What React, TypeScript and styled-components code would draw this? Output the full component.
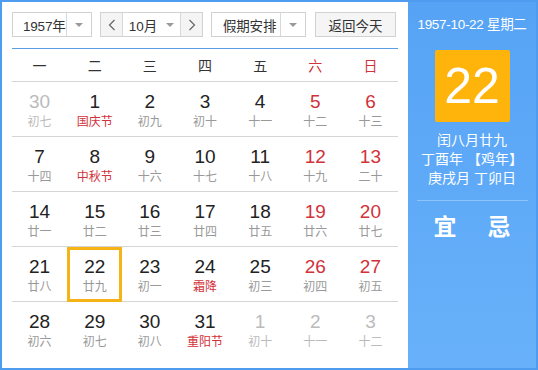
import styled, { createGlobalStyle } from "styled-components";

const GlobalStyle = createGlobalStyle`
  body {
    margin: 0;
    font-family: "Liberation Sans", "Noto Sans CJK SC", sans-serif;
  }
`;

type Day = {
  day: number;
  lunar: string;
  other?: boolean;
  festival?: boolean;
};

const weekNames = ["一", "二", "三", "四", "五", "六", "日"];

const days: Day[] = [
  { day: 30, lunar: "初七", other: true },
  { day: 1, lunar: "国庆节", festival: true },
  { day: 2, lunar: "初九" },
  { day: 3, lunar: "初十" },
  { day: 4, lunar: "十一" },
  { day: 5, lunar: "十二" },
  { day: 6, lunar: "十三" },
  { day: 7, lunar: "十四" },
  { day: 8, lunar: "中秋节", festival: true },
  { day: 9, lunar: "十六" },
  { day: 10, lunar: "十七" },
  { day: 11, lunar: "十八" },
  { day: 12, lunar: "十九" },
  { day: 13, lunar: "二十" },
  { day: 14, lunar: "廿一" },
  { day: 15, lunar: "廿二" },
  { day: 16, lunar: "廿三" },
  { day: 17, lunar: "廿四" },
  { day: 18, lunar: "廿五" },
  { day: 19, lunar: "廿六" },
  { day: 20, lunar: "廿七" },
  { day: 21, lunar: "廿八" },
  { day: 22, lunar: "廿九" },
  { day: 23, lunar: "初一" },
  { day: 24, lunar: "霜降", festival: true },
  { day: 25, lunar: "初三" },
  { day: 26, lunar: "初四" },
  { day: 27, lunar: "初五" },
  { day: 28, lunar: "初六" },
  { day: 29, lunar: "初七" },
  { day: 30, lunar: "初八" },
  { day: 31, lunar: "重阳节", festival: true },
  { day: 1, lunar: "初十", other: true },
  { day: 2, lunar: "十一", other: true },
  { day: 3, lunar: "十二", other: true },
];

const Frame = styled.div`
  width: 538px;
  height: 370px;
  box-sizing: border-box;
  border: 2px solid #4d9cef;
  display: flex;
`;

const Main = styled.div`
  width: 406px;
  box-sizing: border-box;
  padding: 10px 10px 0 10px;
  background: #fff;
`;

const Toolbar = styled.div`
  display: flex;
  height: 25px;
  gap: 8px;
  font-size: 13.5px;
  color: #333;
`;

const Select = styled.div<{ $w: number }>`
  width: ${(p) => p.$w}px;
  height: 25px;
  box-sizing: border-box;
  border: 1px solid #d2d2d2;
  display: flex;
  align-items: stretch;
  background: #fff;
  white-space: nowrap;
`;

const SelectText = styled.div<{ $pad: number }>`
  flex: 1;
  min-width: 0;
  display: flex;
  align-items: center;
  padding-left: ${(p) => p.$pad}px;
  letter-spacing: -0.2px;
`;

const ArrowBox = styled.div`
  flex-shrink: 0;
  width: 24px;
  border-left: 1px solid #d8d8d8;
  display: flex;
  align-items: center;
  justify-content: center;
  background: #fff;
`;

const Caret = styled.span`
  width: 0;
  height: 0;
  border-left: 4px solid transparent;
  border-right: 4px solid transparent;
  border-top: 4px solid #999;
`;

const NavBtn = styled.div<{ $side: "left" | "right" }>`
  flex-shrink: 0;
  width: 21px;
  display: flex;
  align-items: center;
  justify-content: center;
  background: #f4f4f4;
  ${(p) =>
    p.$side === "left"
      ? "border-right: 1px solid #d8d8d8;"
      : "border-left: 1px solid #d8d8d8;"}
`;

const MonthText = styled.div`
  flex: 1;
  display: flex;
  align-items: center;
  justify-content: center;
  gap: 9px;
`;

const TodayBtn = styled.div`
  margin-left: 1px;
  width: 81px;
  height: 25px;
  box-sizing: border-box;
  border: 1px solid #d2d2d2;
  background: #f5f5f5;
  display: flex;
  align-items: center;
  justify-content: center;
`;

const Grid = styled.div`
  margin-top: 11px;
  border-top: 1px solid #5a9fe6;
  display: grid;
  grid-template-columns: repeat(7, 1fr);
`;

const Week = styled.div<{ $red: boolean }>`
  height: 32px;
  border-bottom: 1px solid #d5d5d5;
  display: flex;
  align-items: center;
  justify-content: center;
  font-size: 14px;
  color: ${(p) => (p.$red ? "#d2323a" : "#333")};
`;

const Cell = styled.div<{ $last: boolean; $sel: boolean }>`
  height: 55px;
  box-sizing: border-box;
  border-bottom: ${(p) => (p.$last ? "none" : "1px solid #d5d5d5")};
  display: flex;
  flex-direction: column;
  align-items: center;
  padding-top: ${(p) => (p.$sel ? "7px" : "10px")};
  ${(p) => (p.$sel ? "border: 3px solid #f5b316;" : "")}
`;

const Num = styled.div<{ $color: string }>`
  font-size: 19px;
  line-height: 20px;
  color: ${(p) => p.$color};
`;

const Lunar = styled.div<{ $color: string }>`
  margin-top: 1px;
  font-size: 12px;
  line-height: 18px;
  color: ${(p) => p.$color};
`;

const Side = styled.div`
  flex: 1;
  background: linear-gradient(#56a3f5, #68b1fa);
  display: flex;
  flex-direction: column;
  align-items: center;
  color: #fff;
`;

const DateLine = styled.div`
  margin-top: 14px;
  font-size: 13.5px;
  line-height: 18px;
  letter-spacing: -0.3px;
  white-space: nowrap;
`;

const BigDay = styled.div`
  margin-top: 16px;
  width: 75px;
  height: 72px;
  border-radius: 2px;
  background: #ffb40c;
  display: flex;
  align-items: center;
  justify-content: center;
  font-size: 50px;
  line-height: 1;
`;

const Info = styled.div`
  margin-top: 9px;
  text-align: center;
  font-size: 14px;
  line-height: 19px;
`;

const Divider = styled.div`
  margin-top: 12px;
  width: 111px;
  height: 1px;
  background: #8fc4fa;
`;

const YiJi = styled.div`
  margin-top: 11px;
  display: flex;
  gap: 31px;
  font-size: 23px;
  font-weight: bold;
  line-height: 30px;
`;

const Chevron = ({ dir }: { dir: "l" | "r" }) => (
  <svg width="8" height="12" viewBox="0 0 8 12">
    <polyline
      points={dir === "l" ? "6.5,1 1.5,6 6.5,11" : "1.5,1 6.5,6 1.5,11"}
      fill="none"
      stroke="#666"
      strokeWidth="1.2"
    />
  </svg>
);

export default function App() {
  return (
    <>
      <GlobalStyle />
      <Frame>
        <Main>
          <Toolbar>
            <Select $w={80}>
              <SelectText $pad={10}>1957年</SelectText>
              <ArrowBox>
                <Caret />
              </ArrowBox>
            </Select>
            <Select $w={103}>
              <NavBtn $side="left">
                <Chevron dir="l" />
              </NavBtn>
              <MonthText>
                10月 <Caret />
              </MonthText>
              <NavBtn $side="right">
                <Chevron dir="r" />
              </NavBtn>
            </Select>
            <Select $w={95}>
              <SelectText $pad={11}>假期安排</SelectText>
              <ArrowBox>
                <Caret />
              </ArrowBox>
            </Select>
            <TodayBtn>返回今天</TodayBtn>
          </Toolbar>
          <Grid>
            {weekNames.map((w, i) => (
              <Week key={w} $red={i >= 5}>
                {w}
              </Week>
            ))}
            {days.map((d, i) => {
              const weekend = i % 7 >= 5;
              const numColor = d.other ? "#bbb" : weekend ? "#d2323a" : "#222";
              const lunarColor = d.other
                ? "#bbb"
                : d.festival
                ? "#d2323a"
                : "#999";
              return (
                <Cell
                  key={i}
                  $last={i >= 28}
                  $sel={!d.other && d.day === 22}
                >
                  <Num $color={numColor}>{d.day}</Num>
                  <Lunar $color={lunarColor}>{d.lunar}</Lunar>
                </Cell>
              );
            })}
          </Grid>
        </Main>
        <Side>
          <DateLine>1957-10-22 星期二</DateLine>
          <BigDay>22</BigDay>
          <Info>
            闰八月廿九
            <br />
            丁酉年 【鸡年】
            <br />
            庚戌月 丁卯日
          </Info>
          <Divider />
          <YiJi>
            <span>宜</span>
            <span>忌</span>
          </YiJi>
        </Side>
      </Frame>
    </>
  );
}
